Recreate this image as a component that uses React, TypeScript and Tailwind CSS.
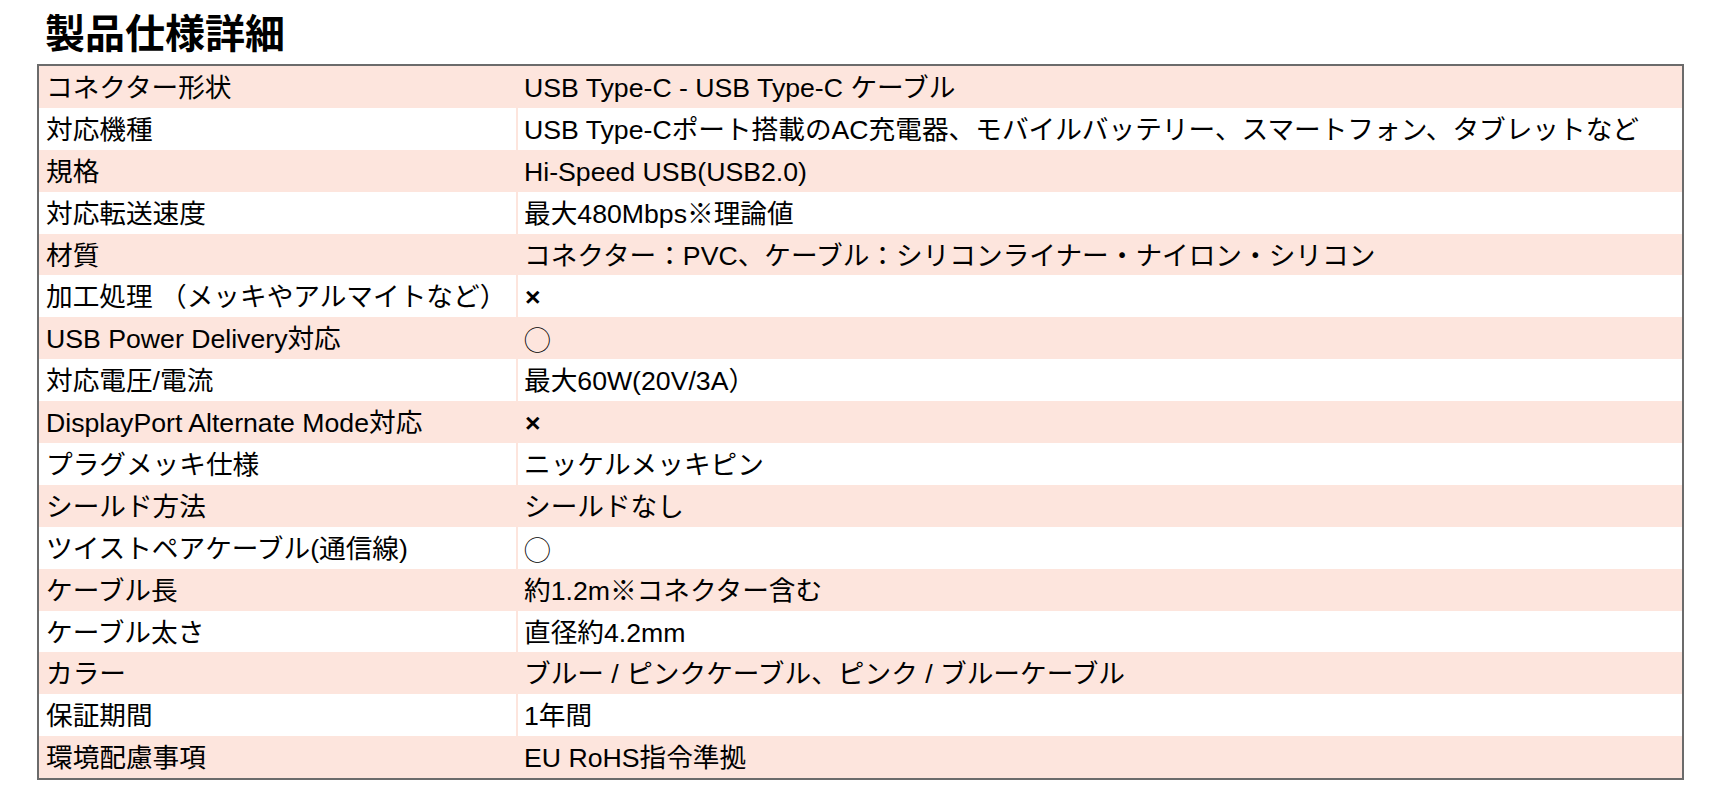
import React from "react";

const rows: [string, string][] = [
  ["コネクター形状", "USB Type-C - USB Type-C ケーブル"],
  ["対応機種", "USB Type-Cポート搭載のAC充電器、モバイルバッテリー、スマートフォン、タブレットなど"],
  ["規格", "Hi-Speed USB(USB2.0)"],
  ["対応転送速度", "最大480Mbps※理論値"],
  ["材質", "コネクター：PVC、ケーブル：シリコンライナー・ナイロン・シリコン"],
  ["加工処理 （メッキやアルマイトなど）", "×"],
  ["USB Power Delivery対応", "◯"],
  ["対応電圧/電流", "最大60W(20V/3A）"],
  ["DisplayPort Alternate Mode対応", "×"],
  ["プラグメッキ仕様", "ニッケルメッキピン"],
  ["シールド方法", "シールドなし"],
  ["ツイストペアケーブル(通信線)", "◯"],
  ["ケーブル長", "約1.2m※コネクター含む"],
  ["ケーブル太さ", "直径約4.2mm"],
  ["カラー", "ブルー / ピンクケーブル、ピンク / ブルーケーブル"],
  ["保証期間", "1年間"],
  ["環境配慮事項", "EU RoHS指令準拠"],
];

export default function App() {
  return (
    <div
      className="min-h-[812px] w-full bg-white text-black pl-[37px] pt-[14px]"
      style={{ fontFamily: '"Liberation Sans", "Noto Sans CJK JP", sans-serif' }}
    >
      <h2 className="pl-[8px] text-[40px] leading-[40px] h-[40px] font-bold">製品仕様詳細</h2>
      <div className="mt-[10px] w-[1647px] border-2 border-[#6b6b6b] flex flex-col">
        {rows.map(([k, v], i) => (
          <div
            key={i}
            className={`flex h-[41.9px] text-[26.67px] leading-[30px] ${i % 2 === 0 ? "bg-[#fde5dd]" : "bg-white"}`}
          >
            <div className="w-[477px] shrink-0 pl-[7px] pt-[2px] flex items-center whitespace-nowrap">{k}</div>
            <div className="flex-1 border-l-2 border-[#fde5dd] pl-[6px] pt-[2px] flex items-center whitespace-nowrap">
              {v === "◯" ? (
                <span style={{ fontFamily: '"Noto Sans CJK JP", sans-serif' }}>◯</span>
              ) : v === "×" ? (
                <span className="font-bold pl-[1px]">×</span>
              ) : (
                v
              )}
            </div>
          </div>
        ))}
      </div>
    </div>
  );
}
